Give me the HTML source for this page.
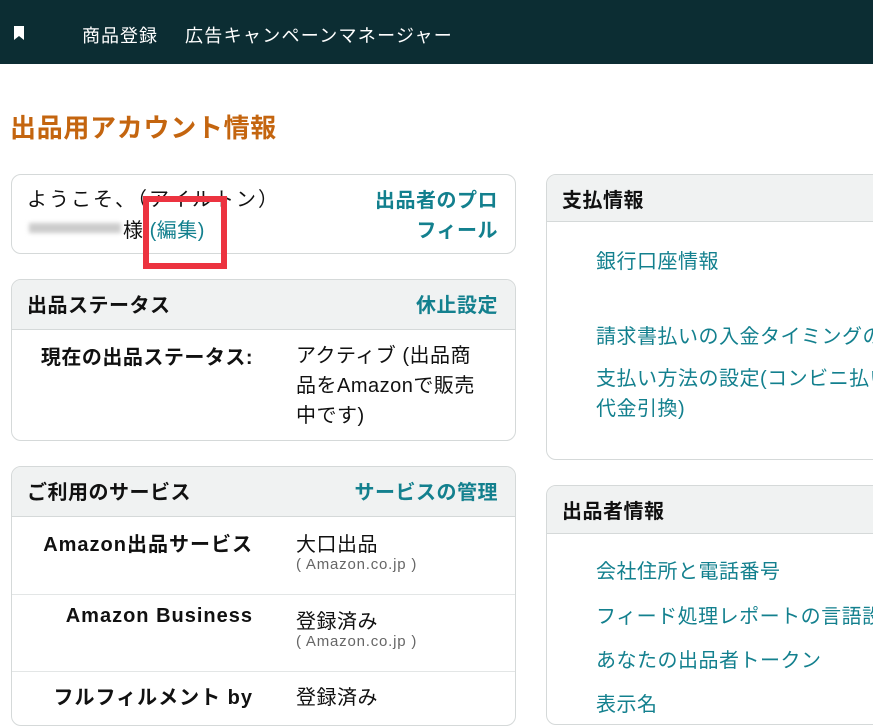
<!DOCTYPE html>
<html><head><meta charset="utf-8"><style>
*{margin:0;padding:0;box-sizing:border-box}
body{width:873px;height:711px;overflow:hidden;background:#fff;font-family:"Liberation Sans","Noto Sans CJK JP",sans-serif;color:#111;position:relative}
.a{position:absolute;white-space:nowrap}
.hdr{position:absolute;left:0;top:0;width:873px;height:64px;background:#0c2d33}
.box{position:absolute;border:1px solid #d5d9d9;border-radius:10px;overflow:hidden;background:#fff}
.bh{position:absolute;left:0;top:0;right:0;background:#f0f2f2;border-bottom:1px solid #d5d9d9}
.lk{color:#13808e}
.b{font-weight:bold}
.f19{font-size:20px;letter-spacing:0.5px}
.sub{font-size:15px;color:#666;letter-spacing:0.8px}
</style></head><body>
<div class="hdr"></div>
<svg class="a" style="left:14px;top:26px" width="10" height="14" viewBox="0 0 10 14"><path d="M0 0H10V14L5 10L0 14Z" fill="#fff"/></svg>
<div class="a" style="left:82px;top:22px;font-size:18px;color:#fff;letter-spacing:1px">商品登録</div>
<div class="a" style="left:185px;top:22px;font-size:18px;color:#fff;letter-spacing:1.3px">広告キャンペーンマネージャー</div>
<div class="a b" style="left:10px;top:108px;font-size:26px;letter-spacing:0.7px;color:#c4650f">出品用アカウント情報</div>

<div class="box" style="left:11px;top:174px;width:505px;height:80px"></div>
<div class="a f19" style="left:27px;top:183px;letter-spacing:2px">ようこそ、（アイルトン）</div>
<div class="a" style="left:29px;top:223px;width:92px;height:10px;background:#ccc;filter:blur(2px)"></div>
<div class="a f19" style="left:123px;top:214px">様 <span class="lk">(編集)</span></div>
<div class="a f19 b lk" style="right:375px;top:184px">出品者のプロ</div>
<div class="a f19 b lk" style="right:375px;top:214px">フィール</div>
<div class="a" style="left:143px;top:196px;width:84px;height:73px;border:6px solid #ec3340"></div>

<div class="box" style="left:11px;top:279px;width:505px;height:162px"><div class="bh" style="height:50px"></div></div>
<div class="a f19 b" style="left:27px;top:289px">出品ステータス</div>
<div class="a f19 b lk" style="right:375px;top:289px">休止設定</div>
<div class="a f19 b" style="right:620px;top:341px">現在の出品ステータス:</div>
<div class="a f19" style="left:296px;top:341px;line-height:30px">アクティブ (出品商<br>品をAmazonで販売<br>中です)</div>

<div class="box" style="left:11px;top:466px;width:505px;height:260px"><div class="bh" style="height:50px"></div>
<div style="position:absolute;left:0;right:0;top:127px;border-top:1px solid #e3e6e6"></div>
<div style="position:absolute;left:0;right:0;top:204px;border-top:1px solid #e3e6e6"></div></div>
<div class="a f19 b" style="left:27px;top:476px">ご利用のサービス</div>
<div class="a f19 b lk" style="right:375px;top:476px">サービスの管理</div>
<div class="a f19 b" style="right:620px;top:528px;letter-spacing:1px">Amazon出品サービス</div>
<div class="a f19" style="left:296px;top:528px">大口出品</div>
<div class="a sub" style="left:296px;top:556px">( Amazon.co.jp )</div>
<div class="a f19 b" style="right:620px;top:605px;letter-spacing:1px">Amazon Business</div>
<div class="a f19" style="left:296px;top:605px">登録済み</div>
<div class="a sub" style="left:296px;top:633px">( Amazon.co.jp )</div>
<div class="a f19 b" style="right:620px;top:681px;letter-spacing:1px">フルフィルメント by</div>
<div class="a f19" style="left:296px;top:681px">登録済み</div>

<div class="box" style="left:546px;top:174px;width:340px;height:286px"><div class="bh" style="height:47px"></div></div>
<div class="a f19 b" style="left:562px;top:184px">支払情報</div>
<div class="a f19 lk" style="left:596px;top:245px">銀行口座情報</div>
<div class="a f19 lk" style="left:596px;top:320px">請求書払いの入金タイミングの</div>
<div class="a f19 lk" style="left:596px;top:364px;line-height:30px">支払い方法の設定(コンビニ払い<br>代金引換)</div>

<div class="box" style="left:546px;top:485px;width:340px;height:240px"><div class="bh" style="height:48px"></div></div>
<div class="a f19 b" style="left:562px;top:495px">出品者情報</div>
<div class="a f19 lk" style="left:596px;top:555px">会社住所と電話番号</div>
<div class="a f19 lk" style="left:596px;top:600px">フィード処理レポートの言語設定</div>
<div class="a f19 lk" style="left:596px;top:644px">あなたの出品者トークン</div>
<div class="a f19 lk" style="left:596px;top:688px">表示名</div>
</body></html>
